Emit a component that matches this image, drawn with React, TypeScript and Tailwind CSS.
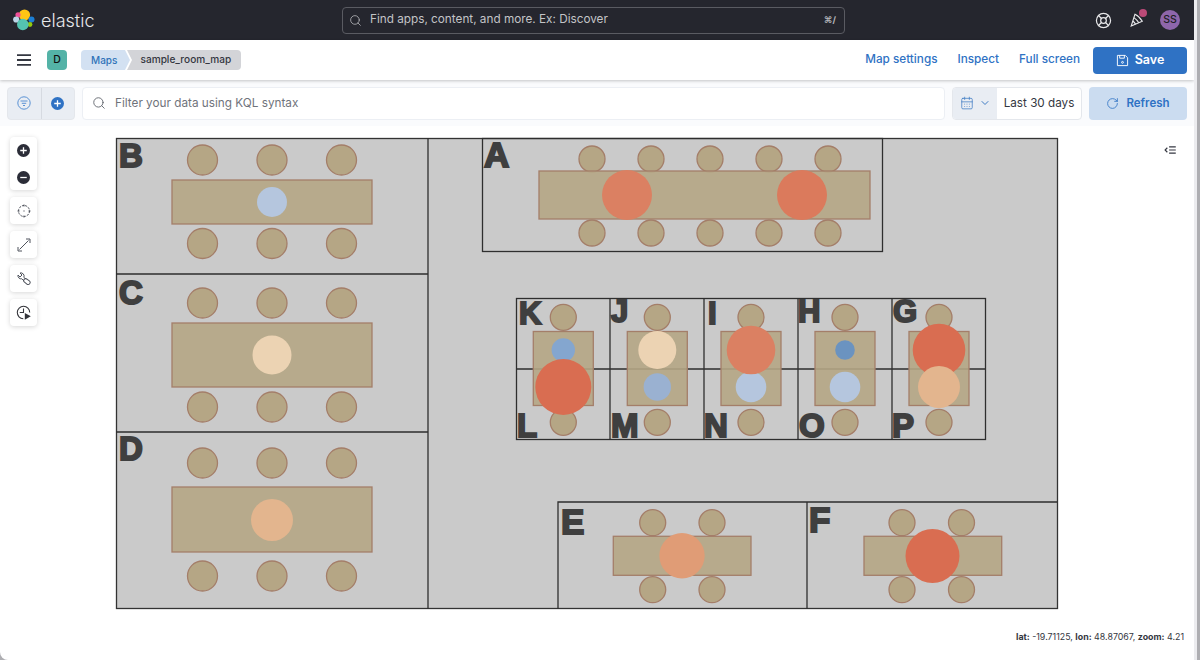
import { CalendarDays, ChevronDown, LifeBuoy, RotateCw, Search } from 'lucide-react';

const TABLE = '#b5a685';
const EDGE = '#a47e69';
const INK = '#33343a';

type Room = {
  chairs: [number, number, number][];
  table: [number, number, number, number];
  spots: [number, number, number, string][];
};

function row(xs: number[], y: number, r: number): [number, number, number][] {
  return xs.map((x) => [x, y, r]);
}

function small(x: number, top: [number, string], bottom: [number, string]): Room {
  return {
    chairs: row([x], 317.3, 13).concat(row([x], 422.3, 13)),
    table: [x - 30, 331.5, 60, 74],
    spots: [
      [x, 350, top[0], top[1]],
      [x, 387, bottom[0], bottom[1]],
    ],
  };
}

const ROOMS: Room[] = [
  {
    chairs: row([202.5, 272, 341.5], 160, 15).concat(row([202.5, 272, 341.5], 243.5, 15)),
    table: [172, 180, 200, 44],
    spots: [[272, 202, 15, '#b5c6de']],
  },
  {
    chairs: row([202.5, 272, 341.5], 303, 15).concat(row([202.5, 272, 341.5], 407, 15)),
    table: [172, 323, 200, 64],
    spots: [[272, 355, 19.5, '#ecd3b3']],
  },
  {
    chairs: row([202.5, 272, 341.5], 463, 15).concat(row([202.5, 272, 341.5], 576, 15)),
    table: [172, 487, 200, 65],
    spots: [[272, 520, 21, '#e3b58e']],
  },
  {
    chairs: row([592, 651, 710, 769, 828], 159, 13).concat(row([592, 651, 710, 769, 828], 233, 13)),
    table: [539, 171, 331, 48],
    spots: [
      [627, 195, 25, '#db8062'],
      [802, 195, 25, '#db7a5c'],
    ],
  },
  small(563.3, [11.7, '#84a6cf'], [28, '#d96d51']),
  small(657.3, [19, '#ecd3b3'], [13.7, '#9ab1d1']),
  small(845, [9.8, '#6b93c0'], [15.3, '#b5c6de']),
  small(751, [15.3, '#b5c6de'], [15.3, '#b5c6de']),
  small(939, [26.3, '#d96d51'], [21, '#e3b58e']),
  {
    chairs: row([652.7, 712], 522.7, 13).concat(row([652.7, 712], 589.7, 13)),
    table: [613.3, 536.3, 137.7, 39],
    spots: [[682, 555.7, 22.7, '#e09c76']],
  },
  {
    chairs: row([902, 961.5], 522.7, 13).concat(row([902, 961.5], 589.7, 13)),
    table: [864, 536.3, 137.7, 39],
    spots: [[932.5, 556, 27, '#d96d51']],
  },
];

const LETTERS: [string, number, number, number][] = [
  ['B', 119, 167, 33],
  ['C', 119, 304, 33],
  ['D', 119, 460, 33],
  ['A', 484, 167, 35],
  ['K', 519, 324, 31],
  ['J', 611, 322, 31],
  ['I', 708, 324, 31],
  ['H', 798, 322, 31],
  ['G', 893, 322, 31],
  ['L', 517, 437, 33],
  ['M', 611, 437, 33],
  ['N', 704, 437, 33],
  ['O', 799, 437, 33],
  ['P', 892, 437, 33],
  ['E', 561, 534, 35],
  ['F', 809, 532, 35],
];

function RoomMap() {
  return (
    <svg viewBox="0 126 1194 534" className="block h-full w-full">
      <rect x="116.5" y="138.5" width="941" height="470" fill="#cacaca" stroke="#333" strokeWidth="1.3" />
      <g fill="none" stroke="#2e2e2e" strokeWidth="1.3">
        <path d="M428 138V609M116 274H428M116 432H428" />
        <rect x="482.5" y="138.5" width="400" height="113" />
        <rect x="516.5" y="298.5" width="469" height="141" />
        <path d="M610 298V440M704 298V440M798 298V440M892 298V440M516 369H986" />
        <path d="M558 609V502H1057M807 502V609" />
      </g>
      {ROOMS.map((room, i) => (
        <g key={i}>
          {room.chairs.map(([x, y, r], j) => (
            <circle key={j} cx={x} cy={y} r={r} fill={TABLE} stroke={EDGE} strokeWidth="1.3" />
          ))}
          <rect
            x={room.table[0]}
            y={room.table[1]}
            width={room.table[2]}
            height={room.table[3]}
            fill={TABLE}
            fillOpacity="0.9"
            stroke={EDGE}
            strokeWidth="1.3"
          />
        </g>
      ))}
      {ROOMS.map((room, i) => (
        <g key={i}>
          {room.spots.map(([x, y, r, c], j) => (
            <circle key={j} cx={x} cy={y} r={r} fill={c} />
          ))}
        </g>
      ))}
      {/* room I: the big circle lies over the pale one */}
      <circle cx="751" cy="350" r="24.3" fill="#db8062" />
      {LETTERS.map(([t, x, y, size]) => (
        <text
          key={t}
          x={x}
          y={y}
          fontSize={size}
          fontWeight="700"
          fontFamily="'Liberation Sans', Arial, sans-serif"
          fill="#3f3f3f"
          stroke="#3f3f3f"
          strokeWidth="2"
        >
          {t}
        </text>
      ))}
    </svg>
  );
}

function ElasticLogo() {
  return (
    <svg viewBox="0 0 22 22" className="h-[22px] w-[22px]">
      <circle cx="11.5" cy="6" r="5.6" fill="#fec514" />
      <circle cx="5" cy="5.8" r="2.6" fill="#f04e98" />
      <circle cx="3.2" cy="10.5" r="3.1" fill="#bcd4e6" />
      <circle cx="18.5" cy="10.5" r="3" fill="#1b7fd6" />
      <circle cx="17" cy="15.5" r="2.4" fill="#93c90e" />
      <circle cx="9.8" cy="15.5" r="5.8" fill="#54c3b2" />
    </svg>
  );
}

function PlusDisc({ color, minus }: { color: string; minus?: boolean }) {
  return (
    <svg viewBox="0 0 14 14" className="h-[13px] w-[13px]">
      <circle cx="7" cy="7" r="7" fill={color} />
      <path d={minus ? 'M3.5 7h7' : 'M3.5 7h7M7 3.5v7'} stroke="#fff" strokeWidth="1.4" />
    </svg>
  );
}

function ToolButton({ children }: { children: React.ReactNode }) {
  return (
    <div className="flex h-[27px] w-[27px] items-center justify-center rounded bg-white shadow-[0_1px_5px_rgba(0,0,0,0.16)]">
      {children}
    </div>
  );
}

export default function App() {
  return (
    <div className="flex h-[660px] w-[1200px] overflow-hidden bg-[#aeaeb2]">
      <div className="flex h-full w-[1194px] flex-col overflow-hidden rounded-bl-[8px] bg-white font-['Inter',sans-serif]">
        <header className="flex h-10 shrink-0 items-center bg-[#25262e] pl-[13px] pr-[14px]">
          <div className="flex w-[329px] items-center gap-[6px]">
            <ElasticLogo />
            <span className="text-[18px] font-light text-[#e8e8ea]">elastic</span>
          </div>
          <div className="flex h-[27px] w-[503px] items-center rounded border border-[#5a5b62] pl-[6px] pr-2 text-[#b4b5b9]">
            <Search size={13} strokeWidth={1.5} />
            <span className="ml-[8px] text-[11.75px] text-[#c3c4c7]">Find apps, content, and more. Ex: Discover</span>
            <span className="ml-auto text-[9px] font-bold">⌘/</span>
          </div>
          <div className="ml-auto flex items-center text-[#e8e8ea]">
            <LifeBuoy size={17} strokeWidth={1.7} />
            <div className="relative ml-[18px]">
              <svg viewBox="0 0 14 14" className="h-[14px] w-[14px]" fill="none" stroke="currentColor" strokeWidth="1.1">
                <path d="M5 1.2 1.2 13 12.3 8.2C10.6 5.2 8 2.6 5 1.2Z" />
                <path d="M3.9 4.6C6 6 7.7 8 8.8 9.8M2.8 8C4 9 5 10.2 5.6 11.2" />
              </svg>
              <span className="absolute -right-[3px] -top-[4px] h-2 w-2 rounded-full bg-[#bc4a78]" />
            </div>
            <div className="ml-[16px] flex h-5 w-5 items-center justify-center rounded-full bg-[#8e66ab] text-[10.5px] font-medium text-[#1d1e24]">
              SS
            </div>
          </div>
        </header>

        <div className="z-10 flex h-10 shrink-0 items-center justify-between bg-white pl-[16.5px] pr-[7px] shadow-[0_1px_3px_rgba(0,0,0,0.22)]">
          <div className="flex items-center">
            <svg viewBox="0 0 14 12" className="h-3 w-[14px]" stroke="#343741" strokeWidth="1.8">
              <path d="M0 1.2h14M0 6h14M0 10.8h14" />
            </svg>
            <div className="ml-[16.5px] flex h-5 w-5 items-center justify-center rounded bg-[#54b3a7] text-[10.5px] font-medium text-[#111]">
              D
            </div>
            <div className="relative z-10 ml-[14px] flex h-5 w-[49px] items-center rounded-l bg-[#d3e1f2] pl-[10px] text-[10px] font-medium text-[#2f72b8] [clip-path:polygon(0_0,calc(100%-5px)_0,100%_50%,calc(100%-5px)_100%,0_100%)]">
              Maps
            </div>
            <div className="-ml-[3px] flex h-5 w-[114px] items-center rounded-r bg-[#d3d4d8] pl-[13.5px] text-[10.1px] font-medium text-[#343741] [clip-path:polygon(0_0,100%_0,100%_100%,0_100%,5px_50%)]">
              sample_room_map
            </div>
          </div>
          <div className="flex items-center text-[11.75px] font-medium text-[#2f72c4]">
            <span>Map settings</span>
            <span className="ml-5">Inspect</span>
            <span className="ml-5">Full screen</span>
            <div className="ml-[13px] flex h-[27px] w-[94px] items-center justify-center gap-[6px] rounded bg-[#2f72c4] text-[12.5px] font-semibold text-white">
              <svg viewBox="0 0 14 14" className="h-[13px] w-[13px]" fill="none" stroke="currentColor">
                <path d="M1.5 1.5h8.5l2.5 2.5v8.5h-11Z" />
                <path d="M4 1.5v3h5v-3" />
                <circle cx="7" cy="9" r="1" />
              </svg>
              Save
            </div>
          </div>
        </div>

        <div className="flex h-[46px] shrink-0 items-center gap-[7px] bg-[#fafbfd] pl-[7px] pr-[7px]">
          <div className="flex h-[33px] w-[68px] rounded border border-[#e4e7ec] bg-[#e9edf3]">
            <div className="flex flex-1 items-center justify-center border-r border-[#d6dae1]">
              <svg viewBox="0 0 14 14" className="h-[14px] w-[14px]" fill="none" stroke="#5a92d4">
                <circle cx="7" cy="7" r="6.2" />
                <path d="M3.5 5h7M4.8 7.3h4.4M6 9.5h2" />
              </svg>
            </div>
            <div className="flex flex-1 items-center justify-center">
              <PlusDisc color="#2f72c4" />
            </div>
          </div>
          <div className="flex h-[33px] flex-1 items-center rounded border border-[#eceff4] bg-white pl-[9px]">
            <Search size={14} strokeWidth={1.5} className="text-[#5c6068]" />
            <span className="ml-[9px] pt-px text-[11.75px] text-[#6f737b]">Filter your data using KQL syntax</span>
          </div>
          <div className="flex h-[33px] w-[130px] overflow-hidden rounded border border-[#e4e7ec] bg-white">
            <div className="flex w-[44px] items-center justify-center gap-[5px] bg-[#e9edf3] text-[#3f7cc4]">
              <CalendarDays size={14} strokeWidth={1.3} />
              <ChevronDown size={12} strokeWidth={2} />
            </div>
            <span className="flex flex-1 items-center justify-center pt-px text-[11.7px] text-[#343741]">Last 30 days</span>
          </div>
          <div className="flex h-[33px] w-[98px] items-center justify-center gap-[7px] rounded bg-[#cbdcf0] text-[11.5px] font-semibold text-[#2f72c4]">
            <RotateCw size={13} strokeWidth={1.5} />
            <span className="pt-px">Refresh</span>
          </div>
        </div>

        <main className="relative flex-1">
          <RoomMap />
          <div className="absolute left-[10px] top-[11px] flex flex-col gap-[7px]">
            <div className="flex h-[53px] w-[27px] flex-col items-center justify-center gap-[14px] rounded bg-white shadow-[0_1px_5px_rgba(0,0,0,0.16)]">
              <PlusDisc color="#2b2d38" />
              <PlusDisc color="#2b2d38" minus />
            </div>
            <ToolButton>
              <svg viewBox="0 0 14 14" className="h-[14px] w-[14px]" fill="none" stroke="#4f535c">
                <circle cx="7" cy="7" r="5.5" strokeDasharray="2.2 1.1" />
                <path d="M7 .5v2M7 11.5v2M.5 7h2M11.5 7h2M7 6.4v1.2" />
              </svg>
            </ToolButton>
            <ToolButton>
              <svg viewBox="0 0 14 14" className="h-[14px] w-[14px]" fill="none" stroke="#4f535c">
                <path d="M1 9v4h4M13 5V1H9M2.5 11.5l9-9" />
              </svg>
            </ToolButton>
            <ToolButton>
              <svg viewBox="0 0 14 14" className="h-[14px] w-[14px]" fill="none" stroke="#4f535c">
                <path d="M1 3 3 5l2-2-2-2a3.2 3.2 0 0 1 3.9 4.2L9 7.4" />
                <path d="M1 3a3.2 3.2 0 0 0 3.8 3.8L7 9" />
                <rect x="6.4" y="7.6" width="7" height="4" rx="2" transform="rotate(38 10 9.6)" />
              </svg>
            </ToolButton>
            <ToolButton>
              <svg viewBox="0 0 14 14" className="h-[15px] w-[15px]" fill="none" stroke={INK}>
                <path d="M6.8 12.8A5.8 5.8 0 1 1 12.8 7M7 3.2V7H3.5" />
                <path d="M8.2 7.5v6.3l5.6-3.2Z" fill={INK} stroke="none" />
              </svg>
            </ToolButton>
          </div>
          <svg viewBox="0 0 13 9" className="absolute right-[18px] top-[20px] h-[8px] w-[12px]" fill="none" stroke="#343741" strokeWidth="1.3">
            <path d="M5.5 1H13M5.5 4.5H13M5.5 8H13M3.5 2 1 4.5 3.5 7" />
          </svg>
          <div className="absolute bottom-[17px] right-[10px] text-[8.85px] text-[#343741]">
            <b>lat:</b> -19.71125, <b>lon:</b> 48.87067, <b>zoom:</b> 4.21
          </div>
        </main>
      </div>
      <div className="h-full w-[3px] bg-[#ececef]" />
    </div>
  );
}
